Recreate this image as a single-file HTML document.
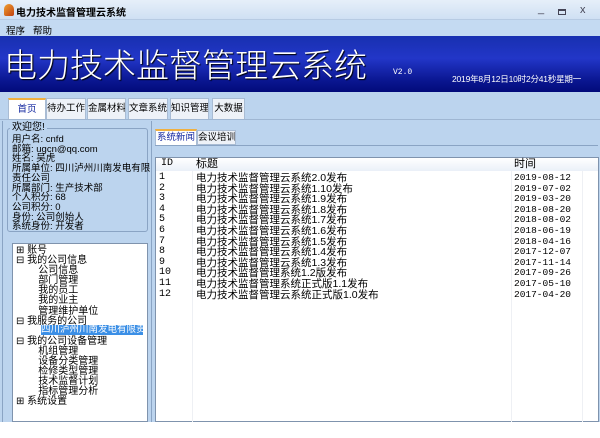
<!DOCTYPE html>
<html><head><meta charset="utf-8"><style>
*{margin:0;padding:0;box-sizing:border-box}
body{width:600px;height:438px;background:#fff;position:relative;overflow:hidden;font-family:"Liberation Sans","Noto Sans CJK SC",sans-serif;font-size:11px;color:#000}
.a{position:absolute}
#win{left:0;top:0;width:600px;height:422px;background:#bcd4ee}
#title{left:0;top:0;width:600px;height:20px;background:linear-gradient(#e6eff9,#cfe0f3);border-bottom:1px solid #b7cbe3}
#menu{left:0;top:20px;width:600px;height:16px;background:#c4daf2}
#banner{left:0;top:36px;width:600px;height:56px;background:linear-gradient(#1830b0,#2236c8 40%,#0a1690 80%,#020a7a)}
.tab{top:98px;height:21px;background:#eef2f8;border:1px solid #a9bcd4;border-bottom:none;text-align:center;line-height:20px;font-size:9.5px;white-space:nowrap;overflow:hidden}
.t{white-space:nowrap;line-height:10.6px;font-size:11px}
</style></head><body>
<div id="win" class="a"></div>
<div id="title" class="a">
 <div class="a" style="left:4px;top:4px;width:10px;height:12px;background:linear-gradient(135deg,#f0a030,#c04010);border-radius:5px 5px 2px 2px"></div>
 <div class="a" style="left:16px;top:4px;font-size:10px;font-weight:bold">电力技术监督管理云系统</div>
 <div class="a" style="left:538px;top:3px;color:#445;font-size:11px">_</div>
 <div class="a" style="left:558px;top:9px;width:8px;height:6px;border:1px solid #445;border-top-width:2px"></div>
 <div class="a" style="left:580px;top:4px;color:#445;font-size:11px">x</div>
</div>
<div id="menu" class="a"><span class="a" style="left:6px;top:3px;font-size:9.5px">程序</span><span class="a" style="left:33px;top:3px;font-size:9.5px">帮助</span></div>
<div id="banner" class="a">
 <div class="a" style="left:4px;top:3px;color:#fff;font-size:33px;letter-spacing:0;font-family:'Noto Sans CJK SC',sans-serif;font-weight:300;text-shadow:1px 1px 1px #000">电力技术监督管理云系统</div>
 <div class="a" style="left:393px;top:32px;color:#fff;font-size:8px;font-family:'Liberation Mono',monospace">V2.0</div>
 <div class="a" style="left:452px;top:37px;color:#fff;font-size:8.5px;letter-spacing:-0.2px">2019年8月12日10时2分41秒星期一</div>
</div>
<div class="a tab" style="left:8px;width:38px;background:#fff;border-top:2px solid #f0b040;color:#1428a0">首页</div>
<div class="a tab" style="left:46px;width:40px">待办工作</div>
<div class="a tab" style="left:87px;width:39px">金属材料</div>
<div class="a tab" style="left:128px;width:40px">文章系统</div>
<div class="a tab" style="left:170px;width:39px">知识管理</div>
<div class="a tab" style="left:212px;width:33px">大数据</div>
<div class="a" style="left:0;top:119px;width:600px;height:1px;background:#9fb6d2"></div>
<!-- left -->
<div class="a" style="left:2px;top:121px;width:150px;height:301px;border-left:1px solid #8aa4c4;border-right:1px solid #8aa4c4"></div>
<div class="a" style="left:7px;top:128px;width:141px;height:104px;border:1px solid #8aa4c4;border-radius:3px"></div>
<div class="a" style="left:10px;top:122px;background:#bcd4ee;padding:0 2px;line-height:12px;font-size:10px">欢迎您!</div>
<div class="a t" style="left:12px;top:135px;line-height:9.7px;font-size:9.5px">用户名: cnfd<br>邮箱: ugcn@qq.com<br>姓名: 吴虎<br>所属单位: 四川泸州川南发电有限<br>责任公司<br>所属部门: 生产技术部<br>个人积分: 68<br>公司积分: 0<br>身份: 公司创始人<br>系统身份: 开发者</div>
<div class="a" style="left:12px;top:243px;width:136px;height:179px;background:#fff;border:1px solid #7f93ad"></div>
<div class="a t" style="left:16px;top:246px;line-height:10.1px;font-size:10px">
⊞ 账号<br>⊟ 我的公司信息<br>&nbsp;&nbsp;&nbsp;&nbsp;&nbsp;&nbsp;&nbsp;&nbsp;公司信息<br>&nbsp;&nbsp;&nbsp;&nbsp;&nbsp;&nbsp;&nbsp;&nbsp;部门管理<br>&nbsp;&nbsp;&nbsp;&nbsp;&nbsp;&nbsp;&nbsp;&nbsp;我的员工<br>&nbsp;&nbsp;&nbsp;&nbsp;&nbsp;&nbsp;&nbsp;&nbsp;我的业主<br>&nbsp;&nbsp;&nbsp;&nbsp;&nbsp;&nbsp;&nbsp;&nbsp;管理维护单位<br>⊟ 我服务的公司<br><br>⊟ 我的公司设备管理<br>&nbsp;&nbsp;&nbsp;&nbsp;&nbsp;&nbsp;&nbsp;&nbsp;机组管理<br>&nbsp;&nbsp;&nbsp;&nbsp;&nbsp;&nbsp;&nbsp;&nbsp;设备分类管理<br>&nbsp;&nbsp;&nbsp;&nbsp;&nbsp;&nbsp;&nbsp;&nbsp;检修类型管理<br>&nbsp;&nbsp;&nbsp;&nbsp;&nbsp;&nbsp;&nbsp;&nbsp;技术监督计划<br>&nbsp;&nbsp;&nbsp;&nbsp;&nbsp;&nbsp;&nbsp;&nbsp;指标管理分析<br>⊞ 系统设置</div>
<div class="a" style="left:41px;top:325px;width:102px;height:10px;background:#3b8fe6;color:#fff;font-size:9.5px;line-height:10px;white-space:nowrap;overflow:hidden">四川泸州川南发电有限责任</div>
<!-- right -->
<div class="a" style="left:155px;top:129px;width:42px;height:17px;background:#fff;border:1px solid #a9bcd4;border-top:2px solid #f0b040;color:#1428a0;text-align:center;line-height:14px;font-size:9.5px;white-space:nowrap;overflow:hidden">系统新闻</div>
<div class="a" style="left:197px;top:130px;width:39px;height:15px;background:#eef2f8;border:1px solid #a9bcd4;text-align:center;line-height:14px;font-size:9.5px;white-space:nowrap;overflow:hidden">会议培训</div>
<div class="a" style="left:155px;top:145px;width:443px;height:1px;background:#8aa4c4"></div>
<div class="a" style="left:155px;top:157px;width:444px;height:265px;background:#fff;border:1px solid #7f93ad"></div>
<div class="a" style="left:156px;top:158px;width:442px;height:13px;background:linear-gradient(#fff,#eaf0f8)"></div>
<div class="a" style="left:192px;top:171px;width:1px;height:251px;background:#eef0f4"></div>
<div class="a" style="left:511px;top:171px;width:1px;height:251px;background:#eef0f4"></div>
<div class="a" style="left:582px;top:171px;width:1px;height:251px;background:#eef0f4"></div>
<div class="a t" style="left:161px;top:159px;font-family:'Liberation Mono',monospace;font-size:10px">ID</div>
<div class="a t" style="left:196px;top:159px">标题</div>
<div class="a t" style="left:514px;top:159px">时间</div>
<div class="a t" style="left:159px;top:173px;font-family:'Liberation Mono',monospace;font-size:10px">1<br>2<br>3<br>4<br>5<br>6<br>7<br>8<br>9<br>10<br>11<br>12</div>
<div class="a t" style="left:196px;top:173px;font-size:10.5px">电力技术监督管理云系统2.0发布<br>电力技术监督管理云系统1.10发布<br>电力技术监督管理云系统1.9发布<br>电力技术监督管理云系统1.8发布<br>电力技术监督管理云系统1.7发布<br>电力技术监督管理云系统1.6发布<br>电力技术监督管理云系统1.5发布<br>电力技术监督管理云系统1.4发布<br>电力技术监督管理云系统1.3发布<br>电力技术监督管理系统1.2版发布<br>电力技术监督管理系统正式版1.1发布<br>电力技术监督管理云系统正式版1.0发布</div>
<div class="a t" style="left:514px;top:173px;font-family:'Liberation Mono',monospace;font-size:9.5px">2019-08-12<br>2019-07-02<br>2019-03-20<br>2018-08-20<br>2018-08-02<br>2018-06-19<br>2018-04-16<br>2017-12-07<br>2017-11-14<br>2017-09-26<br>2017-05-10<br>2017-04-20</div>
</body></html>
